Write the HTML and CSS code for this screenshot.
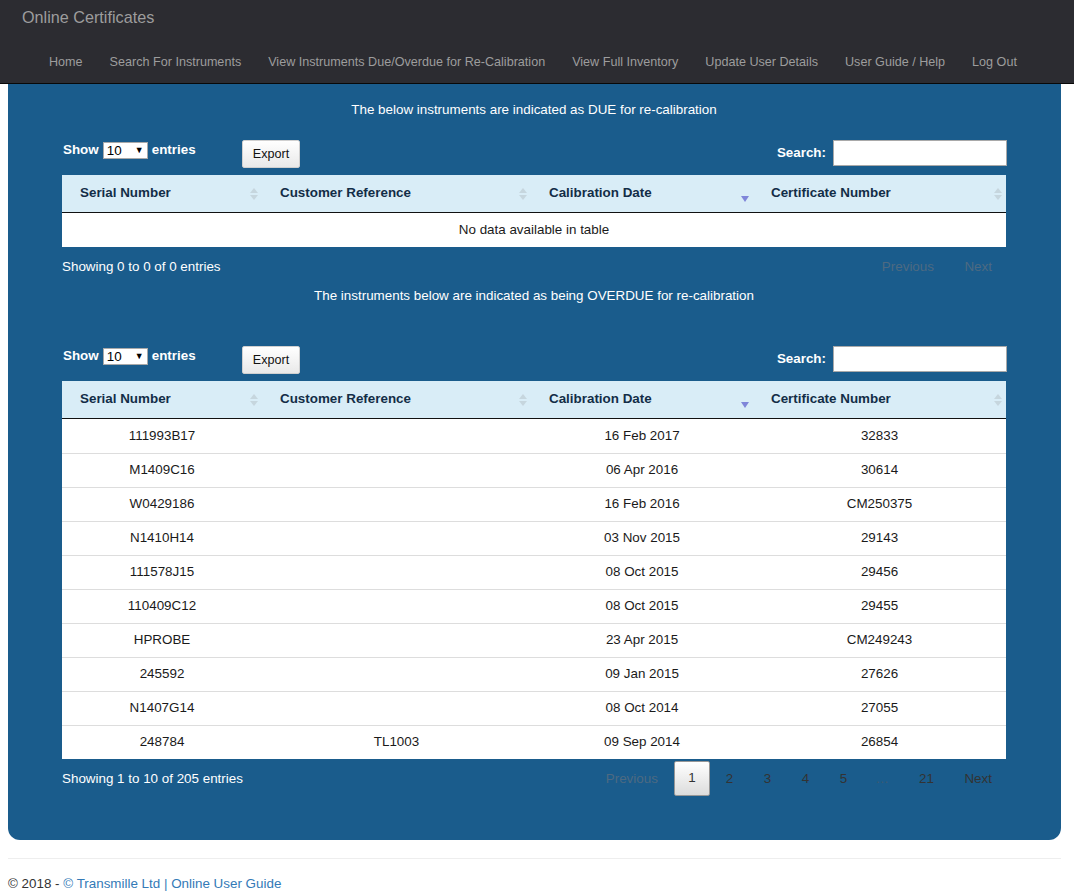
FILE: index.html
```html
<!DOCTYPE html>
<html lang="en">
<head>
<meta charset="utf-8">
<title>Online Certificates</title>
<link rel="stylesheet" href="styles.css">
</head>
<body>
<header class="navbar">
  <div class="brand">Online Certificates</div>
  <nav class="nav-links">
    <a href="#">Home</a>
    <a href="#">Search For Instruments</a>
    <a href="#">View Instruments Due/Overdue for Re-Calibration</a>
    <a href="#">View Full Inventory</a>
    <a href="#">Update User Details</a>
    <a href="#">User Guide / Help</a>
    <a href="#">Log Out</a>
  </nav>
</header>

<main class="panel">
  <p class="section-title first">The below instruments are indicated as DUE for re-calibration</p>

  <div class="controls">
    <div class="length">Show <span class="select"><span>10</span><span class="caret">&#9660;</span></span> entries</div>
    <button class="export" type="button">Export</button>
    <div class="search">Search: <span class="search-input"></span></div>
  </div>
  <table class="grid">
    <colgroup><col class="c1"><col class="c2"><col class="c3"><col class="c4"></colgroup>
    <thead>
      <tr>
        <th>Serial Number<span class="sort both"></span></th>
        <th>Customer Reference<span class="sort both"></span></th>
        <th>Calibration Date<span class="sort desc"></span></th>
        <th>Certificate Number<span class="sort both"></span></th>
      </tr>
    </thead>
    <tbody>
      <tr><td colspan="4">No data available in table</td></tr>
    </tbody>
  </table>
  <div class="info-row">
    <div class="info">Showing 0 to 0 of 0 entries</div>
    <div class="paging">
      <span class="pg disabled">Previous</span>
      <span class="pg disabled">Next</span>
    </div>
  </div>

  <p class="section-title second">The instruments below are indicated as being OVERDUE for re-calibration</p>

  <div class="controls">
    <div class="length">Show <span class="select"><span>10</span><span class="caret">&#9660;</span></span> entries</div>
    <button class="export" type="button">Export</button>
    <div class="search">Search: <span class="search-input"></span></div>
  </div>
  <table class="grid">
    <colgroup><col class="c1"><col class="c2"><col class="c3"><col class="c4"></colgroup>
    <thead>
      <tr>
        <th>Serial Number<span class="sort both"></span></th>
        <th>Customer Reference<span class="sort both"></span></th>
        <th>Calibration Date<span class="sort desc"></span></th>
        <th>Certificate Number<span class="sort both"></span></th>
      </tr>
    </thead>
    <tbody>
      <tr><td>111993B17</td><td></td><td>16 Feb 2017</td><td>32833</td></tr>
      <tr><td>M1409C16</td><td></td><td>06 Apr 2016</td><td>30614</td></tr>
      <tr><td>W0429186</td><td></td><td>16 Feb 2016</td><td>CM250375</td></tr>
      <tr><td>N1410H14</td><td></td><td>03 Nov 2015</td><td>29143</td></tr>
      <tr><td>111578J15</td><td></td><td>08 Oct 2015</td><td>29456</td></tr>
      <tr><td>110409C12</td><td></td><td>08 Oct 2015</td><td>29455</td></tr>
      <tr><td>HPROBE</td><td></td><td>23 Apr 2015</td><td>CM249243</td></tr>
      <tr><td>245592</td><td></td><td>09 Jan 2015</td><td>27626</td></tr>
      <tr><td>N1407G14</td><td></td><td>08 Oct 2014</td><td>27055</td></tr>
      <tr><td>248784</td><td>TL1003</td><td>09 Sep 2014</td><td>26854</td></tr>
    </tbody>
  </table>
  <div class="info-row">
    <div class="info">Showing 1 to 10 of 205 entries</div>
    <div class="paging">
      <span class="pg disabled">Previous</span>
      <span class="pg current">1</span>
      <span class="pg">2</span>
      <span class="pg">3</span>
      <span class="pg">4</span>
      <span class="pg">5</span>
      <span class="ellipsis">&hellip;</span>
      <span class="pg">21</span>
      <span class="pg">Next</span>
    </div>
  </div>
</main>

<footer class="footer">
  <hr class="rule">
  <p class="copy">&copy; 2018 - <a href="#">&copy; Transmille Ltd</a> <span class="sep">|</span> <a href="#">Online User Guide</a></p>
</footer>
</body>
</html>
```

FILE: styles.css
```css
* { box-sizing: border-box; }

body {
  margin: 0;
  font-family: "Liberation Sans", Arial, sans-serif;
  font-size: 13.4px;
  line-height: 20px;
  color: #1a1a1a;
  background: #fff;
}

/* ---------- navbar ---------- */
.navbar {
  height: 84px;
  background: #2c2c31;
  border-bottom: 1px solid #080808;
}
.brand {
  padding: 7px 0 0 22px;
  height: 41px;
  font-size: 16.2px;
  line-height: 20px;
  color: #9d9d9d;
}
.nav-links {
  display: flex;
  gap: 27px;
  padding-left: 49px;
  height: 42px;
  align-items: center;
}
.nav-links a {
  color: #9d9d9d;
  text-decoration: none;
  font-size: 12.6px;
  line-height: 20px;
}

/* ---------- panel ---------- */
.panel {
  margin-left: 8px;
  width: 1053px;
  background: #1a5c8c;
  border-radius: 0 0 12px 12px;
  padding: 16px 55px 43px 54px;
  color: #fff;
}
.section-title {
  margin: 0;
  text-align: center;
  line-height: 20px;
  color: #fff;
}
.section-title.first { margin-bottom: 20px; }
.section-title.second { margin-top: 1px; margin-bottom: 40px; }

.controls {
  display: flex;
  align-items: flex-start;
  height: 35px;
}
.length {
  width: 180px;
  font-weight: bold;
  display: flex;
  align-items: center;
  gap: 4px;
  line-height: 18px;
  margin-top: 1px;
  padding-left: 1px;
}
.select {
  display: inline-flex;
  justify-content: space-between;
  align-items: center;
  width: 45px;
  height: 17px;
  background: #fff;
  border: 1px solid #a9a9a9;
  color: #000;
  font-weight: normal;
  font-size: 13.4px;
  padding: 0 3px 0 3px;
  line-height: 15px;
}
.caret { font-size: 9px; }
.export {
  width: 58px;
  height: 28px;
  padding: 0;
  font-family: "Liberation Sans", Arial, sans-serif;
  font-size: 12.6px;
  color: #111;
  background: linear-gradient(to bottom, #ffffff 0%, #e9e9e9 100%);
  border: 1px solid #d0d0d0;
  border-radius: 2px;
}
.search {
  margin-left: auto;
  display: flex;
  align-items: center;
  gap: 7px;
  font-weight: bold;
  height: 25px;
}
.search-input {
  display: block;
  width: 174px;
  height: 26px;
  margin-right: -1px;
  background: #fff;
  border: 1px solid #a9a9a9;
}

/* ---------- table ---------- */
.grid {
  width: 944px;
  border-collapse: separate;
  border-spacing: 0;
  table-layout: fixed;
  background: #fff;
}
.c1 { width: 200px; }
.c2 { width: 269px; }
.c3 { width: 222px; }
.c4 { width: 253px; }

.grid th {
  position: relative;
  text-align: left;
  background: #d9edf7;
  color: #132d47;
  font-weight: bold;
  padding: 8px 18px 9px 18px;
  line-height: 20px;
  border-bottom: 1px solid #111;
}
.grid td {
  text-align: center;
  padding: 7px 10px;
  line-height: 20px;
  color: #1a1a1a;
}
.grid tbody tr + tr td {
  border-top: 1px solid #dddddd;
  padding-top: 6px;
}

.sort {
  position: absolute;
  right: 4px;
  top: 12px;
  width: 8px;
  height: 14px;
}
.sort.both::before,
.sort.both::after {
  content: "";
  position: absolute;
  left: 0;
  border-left: 4px solid transparent;
  border-right: 4px solid transparent;
}
.sort.both::before {
  top: 1px;
  border-bottom: 5px solid #c6d6de;
}
.sort.both::after {
  top: 8px;
  border-top: 5px solid #c6d6de;
}
.sort.desc::after {
  content: "";
  position: absolute;
  left: 0;
  top: 9px;
  border-left: 4px solid transparent;
  border-right: 4px solid transparent;
  border-top: 6px solid #7f86d9;
}

/* ---------- info / paging ---------- */
.info-row {
  display: flex;
  justify-content: space-between;
  align-items: center;
  height: 38px;
  padding-top: 1px;
}
.info { color: #fff; }
.paging {
  display: flex;
  align-items: center;
}
.pg {
  display: inline-block;
  padding: 6px 13.25px;
  margin-left: 2px;
  border: 1px solid transparent;
  border-radius: 2px;
  color: #333;
  line-height: 20px;
}
.pg:last-child { padding-right: 13px; }
.pg.disabled { color: #4d6a82; }
.pg.current {
  padding: 6px 13px 7px;
  color: #333;
  background: linear-gradient(to bottom, #ffffff 0%, #dcdcdc 100%);
  border: 1px solid #979797;
}
.ellipsis {
  padding: 0 14px;
  color: #3f5a70;
}

/* ---------- footer ---------- */
.footer {
  margin-left: 8px;
  width: 1053px;
}
.rule {
  margin: 18px 0 0 0;
  border: 0;
  border-top: 1px solid #eeeeee;
}
.copy {
  margin: 15px 0 0 0;
  line-height: 20px;
  color: #333;
  font-size: 13.4px;
}
.copy a {
  color: #337ab7;
  text-decoration: none;
}
.sep { color: #337ab7; }
```
